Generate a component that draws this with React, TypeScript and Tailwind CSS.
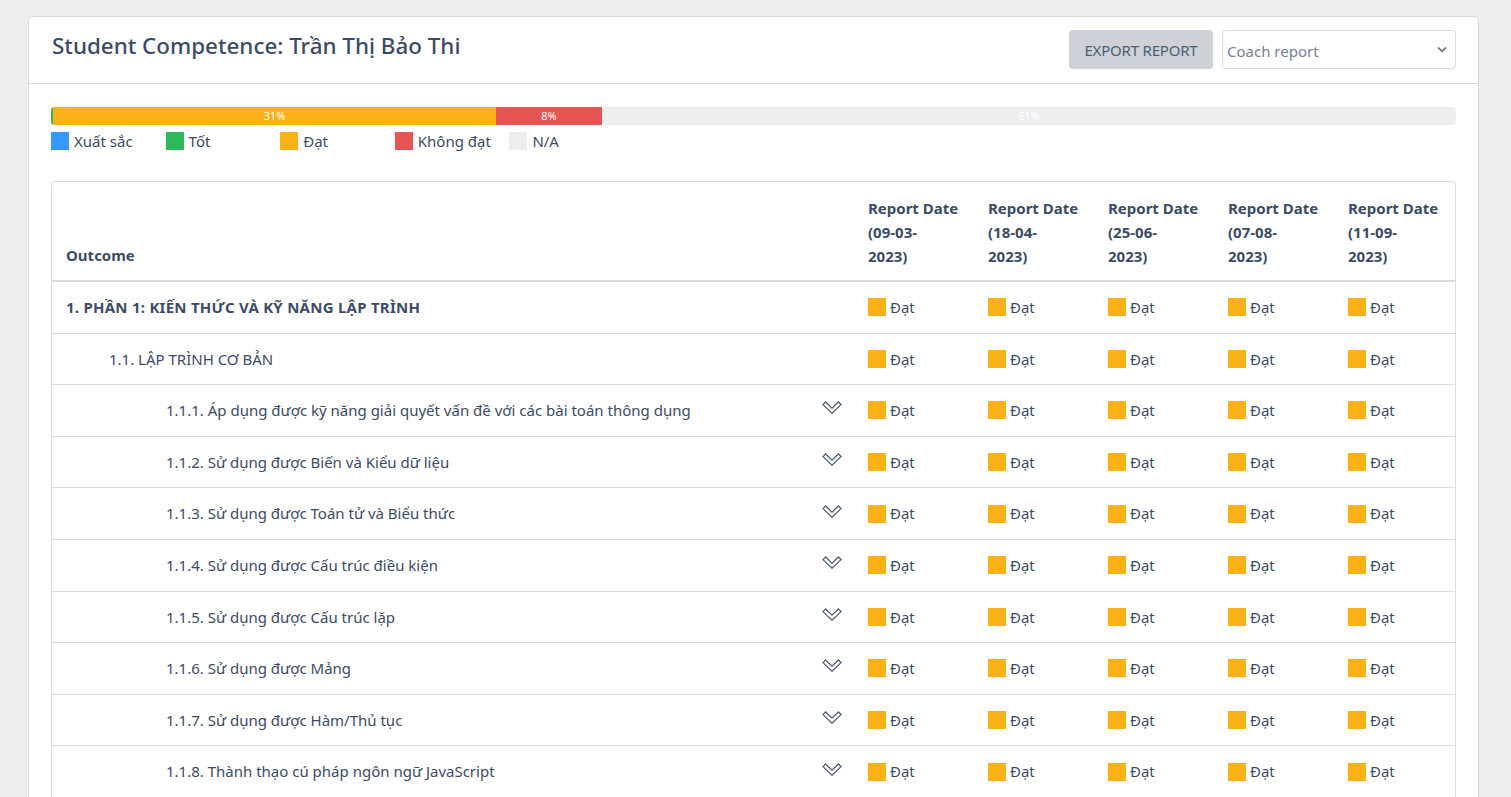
import React from "react";

const dates = ["09-03-", "18-04-", "25-06-", "07-08-", "11-09-"];

type Row = { label: string; level: 0 | 1 | 2 };

const rows: Row[] = [
  { label: "1. PHẦN 1: KIẾN THỨC VÀ KỸ NĂNG LẬP TRÌNH", level: 0 },
  { label: "1.1. LẬP TRÌNH CƠ BẢN", level: 1 },
  { label: "1.1.1. Áp dụng được kỹ năng giải quyết vấn đề với các bài toán thông dụng", level: 2 },
  { label: "1.1.2. Sử dụng được Biến và Kiểu dữ liệu", level: 2 },
  { label: "1.1.3. Sử dụng được Toán tử và Biểu thức", level: 2 },
  { label: "1.1.4. Sử dụng được Cấu trúc điều kiện", level: 2 },
  { label: "1.1.5. Sử dụng được Cấu trúc lặp", level: 2 },
  { label: "1.1.6. Sử dụng được Mảng", level: 2 },
  { label: "1.1.7. Sử dụng được Hàm/Thủ tục", level: 2 },
  { label: "1.1.8. Thành thạo cú pháp ngôn ngữ JavaScript", level: 2 },
];

function Chevron() {
  return (
    <svg width="20" height="13" viewBox="0 0 20 13" className="shrink-0">
      <path
        d="M1 3.6 L3.6 1 L10 7.2 L16.4 1 L19 3.6 L10 12.2 Z"
        fill="none"
        stroke="#4f5d73"
        strokeWidth="1.3"
        strokeLinejoin="miter"
      />
    </svg>
  );
}

function Status() {
  return (
    <div className="flex items-center gap-[4px] pl-4">
      <span className="w-[18px] h-[18px] bg-[#f9b115] inline-block" />
      <span>Đạt</span>
    </div>
  );
}

export default function App() {
  return (
    <div
      className="min-h-[797px] bg-[#ebedef] pt-4 pl-[28px] pr-[32px] text-[#3c4b64] overflow-hidden"
      style={{ fontFamily: '"Noto Sans", "Open Sans", sans-serif' }}
    >
      <div className="bg-white border border-[#d8dbe0] rounded-[4px] h-[800px]">
        {/* header */}
        <div className="h-[67px] border-b border-[#d8dbe0] flex items-center justify-between pl-[23px] pr-[22px]">
          <h4 className="text-[22.4px] font-medium leading-[28px] -mt-[9px]">Student Competence: Trần Thị Bảo Thi</h4>
          <div className="flex items-center gap-[9px] -mt-[1px]">
            <button className="h-[39px] w-[144px] bg-[#ced2d8] rounded-[4px] text-[#4f5d73] text-[15px] tracking-[-0.2px] pt-[1px]">
              EXPORT REPORT
            </button>
            <div className="h-[39px] w-[234px] border border-[#d8dbe0] rounded-[4px] flex items-center justify-between pl-[4px] pr-[8px] pt-[3px] text-[15px] text-[#768192]">
              <span>Coach report</span>
              <svg width="10" height="7" viewBox="0 0 10 7" className="-mt-[3px]">
                <path d="M1 1.5 L5 5.2 L9 1.5" fill="none" stroke="#768192" strokeWidth="1.8" />
              </svg>
            </div>
          </div>
        </div>

        {/* body */}
        <div className="px-[22px] pt-[23px]">
          {/* progress */}
          <div className="h-[18px] bg-[#ebedef] rounded-[4px] flex overflow-hidden text-[11px] leading-[18px] text-white">
            <div className="w-[2px] bg-[#2eb85c]" />
            <div className="w-[443px] bg-[#f9b115] text-center">31%</div>
            <div className="w-[106px] bg-[#e55353] text-center">8%</div>
            <div className="flex-1 text-center">61%</div>
          </div>
          {/* legend */}
          <div className="flex mt-[6px] text-[15px] leading-[20px]">
            {[
              ["bg-[#39f]", "Xuất sắc"],
              ["bg-[#2eb85c]", "Tốt"],
              ["bg-[#f9b115]", "Đạt"],
              ["bg-[#e55353]", "Không đạt"],
              ["bg-[#ebedef]", "N/A"],
            ].map(([c, t]) => (
              <div key={t} className="w-[114.6px] flex items-center gap-[5px]">
                <span className={`w-[18px] h-[18px] inline-block ${c}`} />
                <span>{t}</span>
              </div>
            ))}
          </div>

          {/* table */}
          <div className="mt-[30px] border border-[#d8dbe0] rounded-t-[4px] text-[15px]">
            <div className="grid grid-cols-[800px_120px_120px_120px_120px_1fr] border-b-2 border-[#d8dbe0] h-[100px] font-bold leading-[24px]">
              <div className="flex items-end pl-[14px] pb-[13px]">Outcome</div>
              {dates.map((d) => (
                <div key={d} className="pl-4 pt-[14px]">
                  Report Date
                  <br />({d}
                  <br />
                  2023)
                </div>
              ))}
            </div>
            {rows.map((r, i) => (
              <div
                key={i}
                className="grid grid-cols-[800px_120px_120px_120px_120px_1fr] h-[51.6px] border-b border-[#d8dbe0] items-center"
              >
                <div
                  className={`flex items-center pr-[10px] ${
                    r.level === 0
                      ? "pl-[14px] font-bold tracking-[0.25px]"
                      : r.level === 1
                      ? "pl-[57px]"
                      : "pl-[114px]"
                  }`}
                >
                  <span>{r.label}</span>
                  {r.level === 2 && (
                    <span className="ml-auto -mt-[5px]">
                      <Chevron />
                    </span>
                  )}
                </div>
                {dates.map((d) => (
                  <Status key={d} />
                ))}
              </div>
            ))}
          </div>
        </div>
      </div>
    </div>
  );
}
